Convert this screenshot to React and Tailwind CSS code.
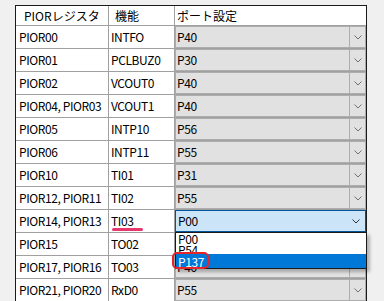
import React from "react";

const ROWS = [
  { reg: "PIOR00", fn: "INTFO", port: "P40" },
  { reg: "PIOR01", fn: "PCLBUZ0", port: "P30" },
  { reg: "PIOR02", fn: "VCOUT0", port: "P40" },
  { reg: "PIOR04, PIOR03", fn: "VCOUT1", port: "P40" },
  { reg: "PIOR05", fn: "INTP10", port: "P56" },
  { reg: "PIOR06", fn: "INTP11", port: "P55" },
  { reg: "PIOR10", fn: "TI01", port: "P31" },
  { reg: "PIOR12, PIOR11", fn: "TI02", port: "P55" },
  { reg: "PIOR14, PIOR13", fn: "TI03", port: "P00", open: true },
  { reg: "PIOR15", fn: "TO02", port: "P54" },
  { reg: "PIOR17, PIOR16", fn: "TO03", port: "P40" },
  { reg: "PIOR21, PIOR20", fn: "RxD0", port: "P55" },
];

const Chevron = ({ dark }) => (
  <svg width="8" height="5" viewBox="0 0 8 5" className="block">
    <polyline points="0.5,0.5 4,4 7.5,0.5" fill="none" stroke={dark ? "#333" : "#707070"} strokeWidth="1" />
  </svg>
);

function Combo({ value, open }) {
  if (open) {
    return (
      <div className="relative h-full">
        <div className="flex h-full items-center border border-[#005499] bg-[#cce4f7]">
          <span className="flex-1 pl-[2px]">{value}</span>
          <div className="flex w-[16px] justify-center pr-[2px]">
            <Chevron dark />
          </div>
        </div>
        {/* dropdown list */}
        <div className="absolute left-0 top-[22px] z-10 w-[192px] border border-[#1a1a1a] bg-white leading-[11px] shadow-[3px_3px_3px_rgba(0,0,0,0.25)]">
          <div className="h-[11px] overflow-hidden pl-[2px]">P00</div>
          <div className="h-[10px] overflow-hidden pl-[2px]">P54</div>
          <div className="flex h-[14px] items-center bg-[#0078d7] pl-[2px] text-white">P137</div>
        </div>
        {/* red annotation box */}
        <div className="absolute left-[-3px] top-[42px] z-20 h-[17px] w-[37px] rounded-[5px] border-2 border-[#e5252a]" />
      </div>
    );
  }
  return (
    <div className="flex h-full items-center border border-[#adadad] bg-[#e1e1e1]">
      <span className="flex-1 pl-[1px]">{value}</span>
      <div className="flex h-full w-[16px] items-center justify-center border-l border-[#adadad]">
        <Chevron />
      </div>
    </div>
  );
}

export default function App() {
  return (
    <div
      className="h-[301px] w-[384px] overflow-hidden bg-[#f0f0f0] pl-[15px] pt-[5px] text-[12px] text-black"
      style={{ fontFamily: '"Noto Sans CJK JP", "Noto Sans", sans-serif' }}
    >
      <div className="w-[352px] border border-[#1a1a1a] bg-white">
        {/* header */}
        <div className="flex h-[20px] border-b border-[#a0a0a0] leading-[19px]">
          <div className="w-[93px] border-r border-[#a0a0a0] pl-[8px]">PIORレジスタ</div>
          <div className="w-[66px] border-r border-[#a0a0a0] pl-[6px]">機能</div>
          <div className="flex-1 pl-[2px]">ポート設定</div>
        </div>
        {ROWS.map((r) => (
          <div key={r.reg} className="flex h-[23px] border-b border-[#a0a0a0] tracking-[-0.4px]">
            <div className="flex w-[93px] items-center border-r border-[#a0a0a0] pl-[3px]">{r.reg}</div>
            <div className="flex w-[66px] items-center border-r border-[#a0a0a0] pl-[2px]">
              {r.open ? (
                <span className="relative">
                  {r.fn}
                  <span className="absolute left-[1px] top-[16px] h-[3px] w-[31px] rounded-full bg-[#e8376c]" />
                </span>
              ) : (
                r.fn
              )}
            </div>
            <div className="flex-1">
              <Combo value={r.port} open={r.open} />
            </div>
          </div>
        ))}
      </div>
    </div>
  );
}
